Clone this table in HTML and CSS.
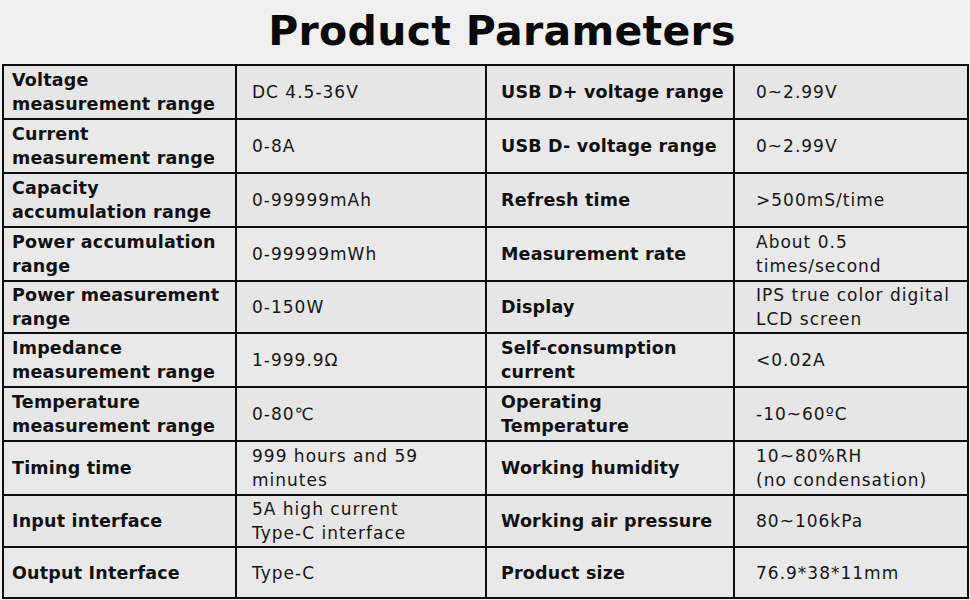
FILE: index.html
```html
<!DOCTYPE html>
<html lang="en">
<head>
<meta charset="utf-8">
<title>Product Parameters</title>
<link rel="stylesheet" href="styles.css">
</head>
<body>
<div class="page">
  <h1 class="title">Product Parameters</h1>
  <div class="table">
    <div class="cell label">Voltage<br>measurement range</div>
    <div class="cell value">DC 4.5-36V</div>
    <div class="cell label2">USB D+ voltage range</div>
    <div class="cell value2">0~2.99V</div>

    <div class="cell label">Current<br>measurement range</div>
    <div class="cell value">0-8A</div>
    <div class="cell label2">USB D- voltage range</div>
    <div class="cell value2">0~2.99V</div>

    <div class="cell label">Capacity<br>accumulation range</div>
    <div class="cell value">0-99999mAh</div>
    <div class="cell label2">Refresh time</div>
    <div class="cell value2">&gt;500mS/time</div>

    <div class="cell label">Power accumulation<br>range</div>
    <div class="cell value">0-99999mWh</div>
    <div class="cell label2">Measurement rate</div>
    <div class="cell value2">About 0.5<br>times/second</div>

    <div class="cell label">Power measurement<br>range</div>
    <div class="cell value">0-150W</div>
    <div class="cell label2">Display</div>
    <div class="cell value2">IPS true color digital<br>LCD screen</div>

    <div class="cell label">Impedance<br>measurement range</div>
    <div class="cell value">1-999.9Ω</div>
    <div class="cell label2">Self-consumption<br>current</div>
    <div class="cell value2">&lt;0.02A</div>

    <div class="cell label">Temperature<br>measurement range</div>
    <div class="cell value">0-80℃</div>
    <div class="cell label2">Operating<br>Temperature</div>
    <div class="cell value2">-10~60ºC</div>

    <div class="cell label">Timing time</div>
    <div class="cell value">999 hours and 59<br>minutes</div>
    <div class="cell label2">Working humidity</div>
    <div class="cell value2">10~80%RH<br>(no condensation)</div>

    <div class="cell label">Input interface</div>
    <div class="cell value">5A high current<br>Type-C interface</div>
    <div class="cell label2">Working air pressure</div>
    <div class="cell value2">80~106kPa</div>

    <div class="cell label">Output Interface</div>
    <div class="cell value">Type-C</div>
    <div class="cell label2">Product size</div>
    <div class="cell value2">76.9*38*11mm</div>
  </div>
</div>
</body>
</html>
```
FILE: styles.css
```css
html, body {
  margin: 0;
  padding: 0;
}
body {
  width: 970px;
  height: 600px;
  overflow: hidden;
  background: #f0f0f0;
  font-family: "DejaVu Sans", "Open Sans", sans-serif;
  color: #111;
}
.page {
  display: flex;
  flex-direction: column;
  align-items: flex-start;
}
.title {
  align-self: stretch;
  margin: 0;
  height: 64px;
  box-sizing: border-box;
  padding-top: 4px;
  padding-left: 34px;
  text-align: center;
  font-size: 41px;
  line-height: 54px;
  font-weight: 700;
  letter-spacing: 0.3px;
  color: #0a0a0a;
}
.table {
  margin-left: 2px;
  display: grid;
  grid-template-columns: 231px 248px 246px 232px;
  grid-template-rows: 52px 52px 52px 52px 50px 52px 52px 52px 50px 49px;
  gap: 2px;
  border: 2px solid #0d0d0d;
  background: #0d0d0d;
}
.cell {
  background: #e9e9e9;
  display: flex;
  align-items: center;
  font-size: 17px;
  line-height: 24px;
  white-space: nowrap;
}
.cell:nth-child(8n+1),
.cell:nth-child(8n+2),
.cell:nth-child(8n+3),
.cell:nth-child(8n+4) {
  background: #e6e6e6;
}
.label, .label2 {
  font-weight: 700;
  font-size: 17.5px;
  letter-spacing: 0.2px;
}
.value, .value2 {
  letter-spacing: 1px;
  color: #161616;
}
.label {
  padding-left: 8px;
}
.value {
  padding-left: 15px;
}
.label2 {
  padding-left: 14px;
}
.value2 {
  padding-left: 21px;
}
```
